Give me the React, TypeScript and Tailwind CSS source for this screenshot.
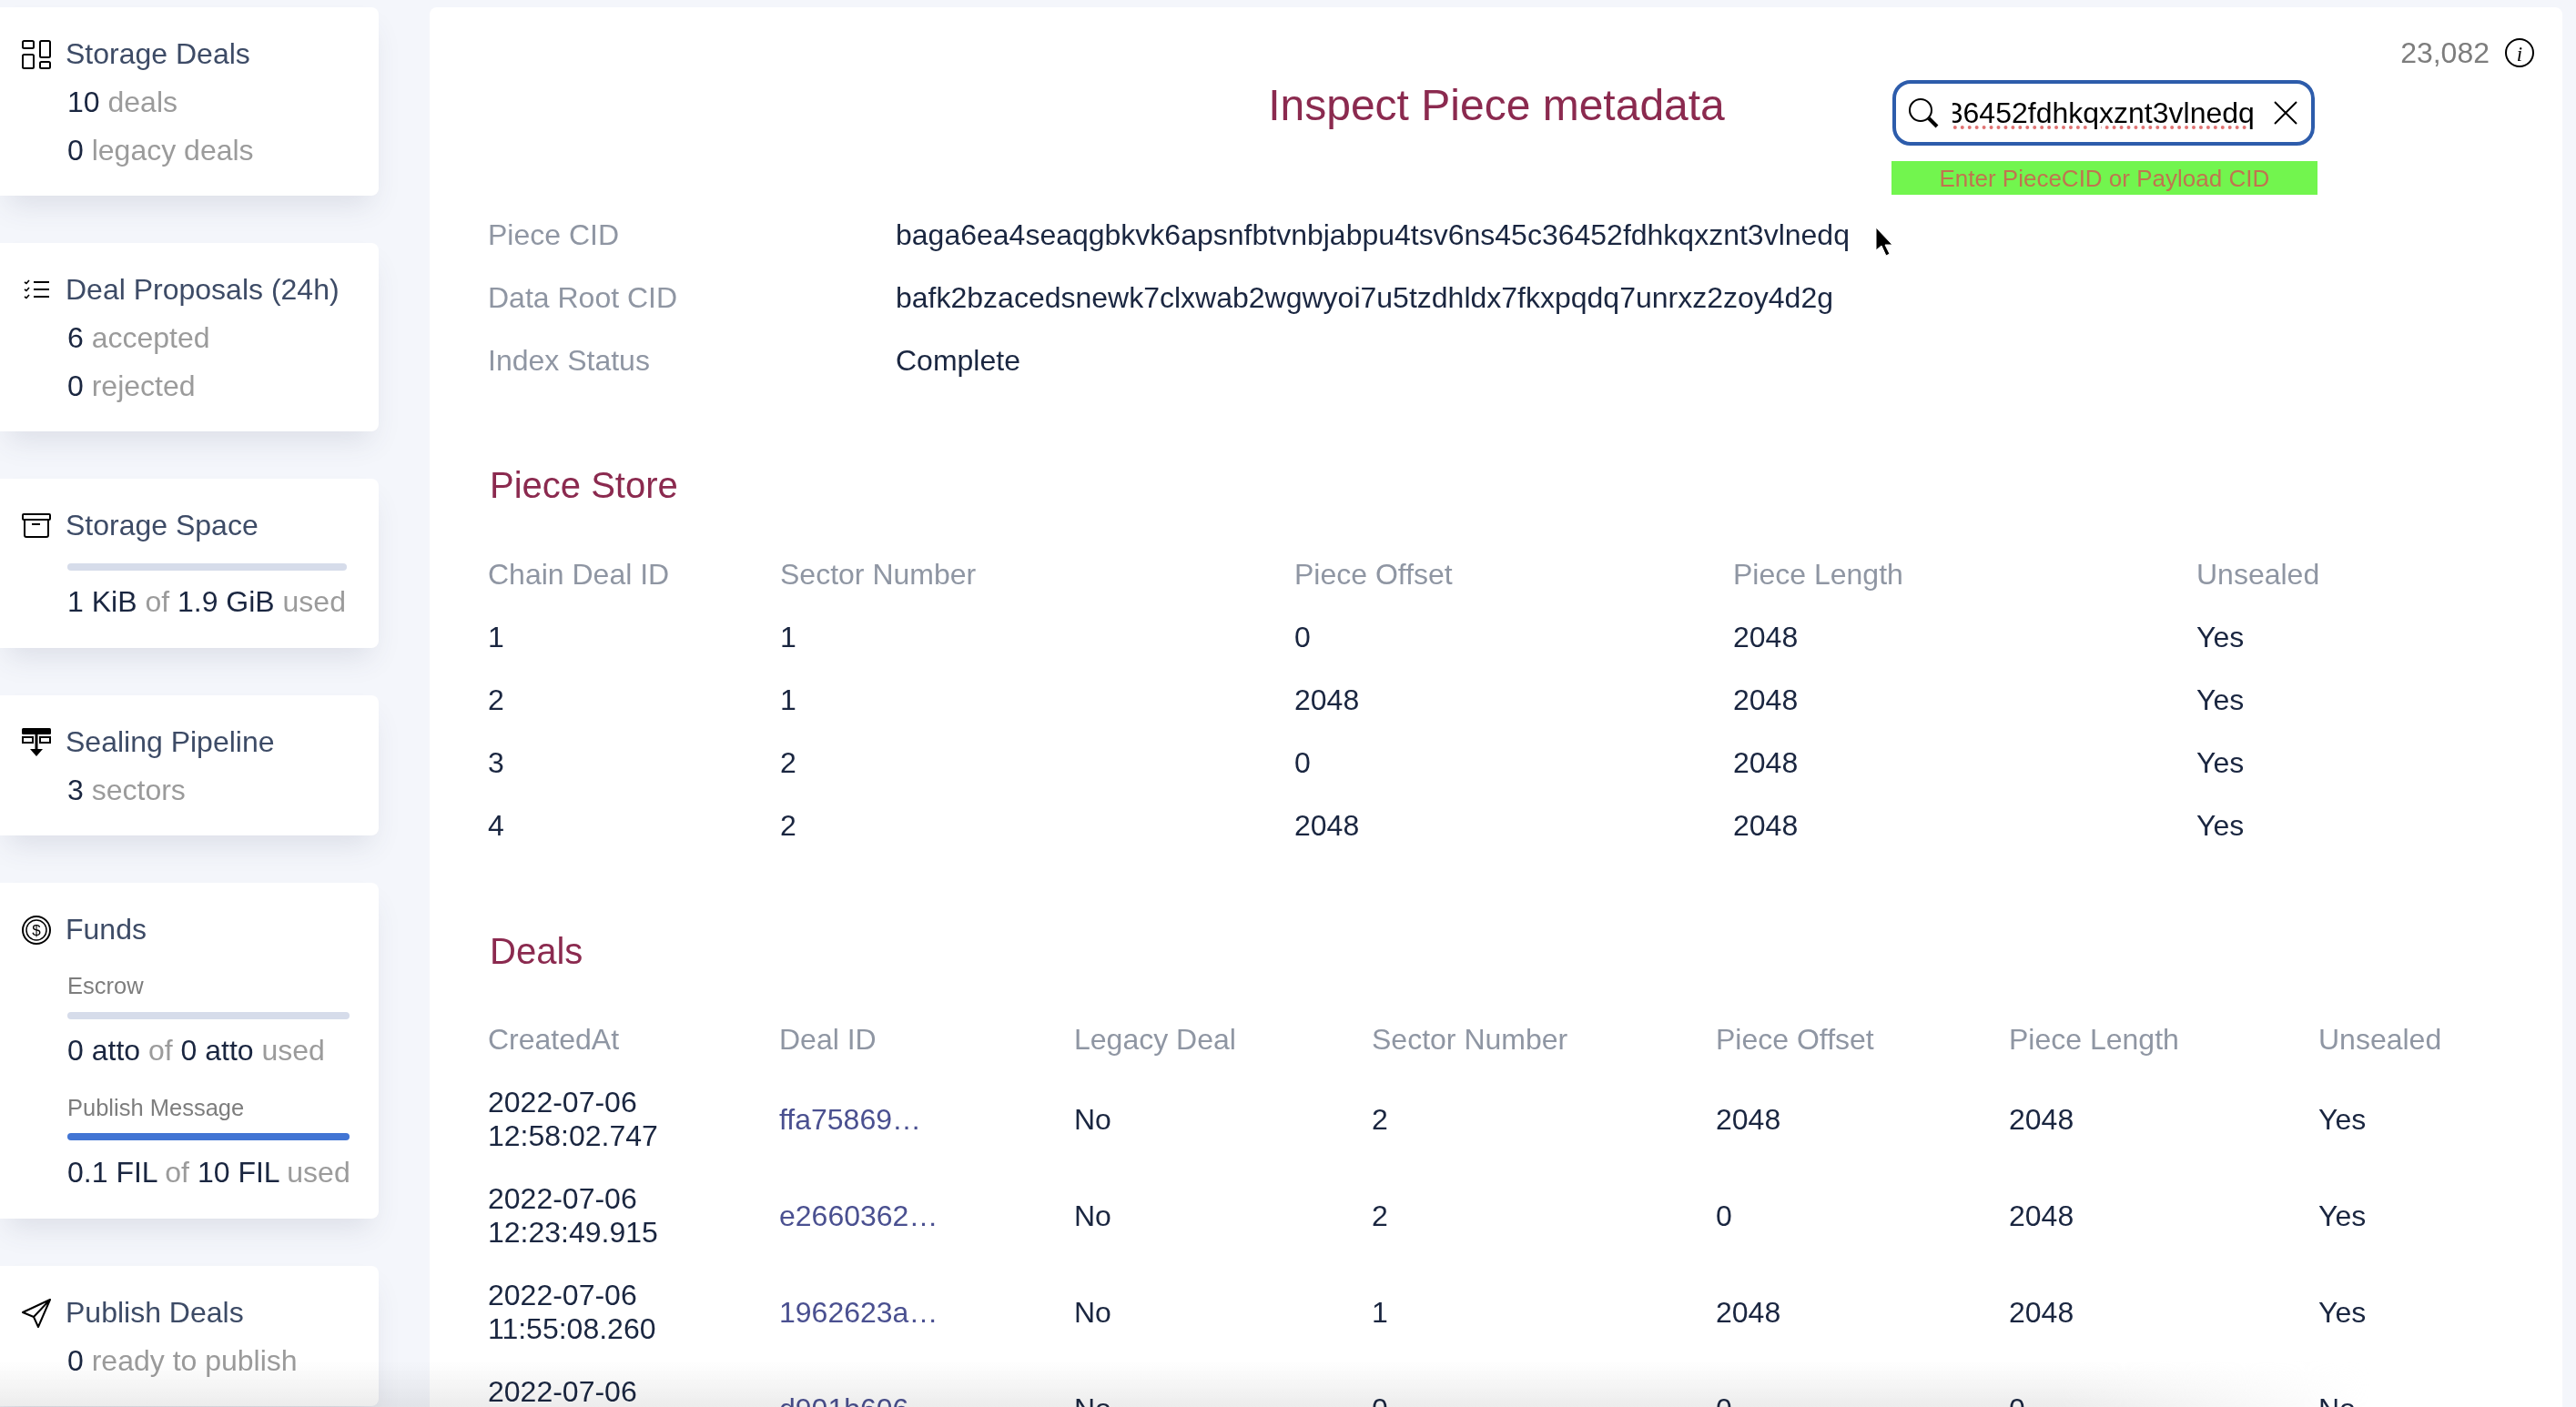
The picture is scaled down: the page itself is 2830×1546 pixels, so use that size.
import React from 'react';

const StorageIcon = () => (
  <svg width="32" height="32" viewBox="0 0 32 32" fill="none" stroke="black" strokeWidth="2">
    <rect x="1" y="1" width="12" height="8" rx="1.5" />
    <rect x="1" y="16" width="12" height="15" rx="1.5" />
    <rect x="20" y="1" width="11" height="18" rx="1.5" />
    <rect x="20" y="24" width="11" height="7" rx="1.5" />
  </svg>
);

const ListIcon = () => (
  <svg width="32" height="32" viewBox="0 0 32 32" fill="none" stroke="black">
    <path d="M13 7h17M13 15h17M13 23h17" strokeWidth="2" />
    <path d="M3 7l2 1.5 3-3.5M3 15l2 1.5 3-3.5M3 23l2 1.5 3-3.5" strokeWidth="1.6" />
  </svg>
);

const ArchiveIcon = () => (
  <svg width="32" height="32" viewBox="0 0 32 32" fill="none" stroke="black" strokeWidth="2">
    <rect x="1" y="3" width="30" height="6" rx="1" />
    <path d="M3 9v17a2 2 0 0 0 2 2h22a2 2 0 0 0 2-2V9" />
    <path d="M11 14h9" />
  </svg>
);

const PipelineIcon = () => (
  <svg width="32" height="32" viewBox="0 0 32 32" fill="none">
    <rect x="0" y="0" width="32" height="7" rx="1.5" fill="black" />
    <path d="M1 10h11v6H1zM20 10h11v6H20z" stroke="black" strokeWidth="2" />
    <path d="M16 6v19" stroke="black" strokeWidth="3" />
    <path d="M9 23h14l-7 8z" fill="black" />
  </svg>
);

const FundsIcon = () => (
  <svg width="32" height="32" viewBox="0 0 32 32" fill="none" stroke="black">
    <circle cx="16" cy="16" r="15" strokeWidth="2" />
    <circle cx="16" cy="16" r="11" strokeWidth="1.5" />
    <text x="16" y="22" textAnchor="middle" fontSize="17" fill="black" stroke="none">$</text>
  </svg>
);

const SendIcon = () => (
  <svg width="32" height="32" viewBox="0 0 32 32" fill="none" stroke="black" strokeWidth="2" strokeLinejoin="round">
    <path d="M31 1L1 15l12 5 5 11zM31 1L13 20" />
  </svg>
);

const Num = ({ children }: { children: React.ReactNode }) => <span className="text-[#1a2640]">{children}</span>;
const Dim = ({ children }: { children: React.ReactNode }) => <span className="text-[#9b9b9b]">{children}</span>;

const Card = ({ icon, title, tall, children }: { icon: React.ReactNode; title: string; tall?: boolean; children: React.ReactNode }) => (
  <div className={`bg-white rounded-r-lg shadow-[0_18px_30px_-8px_rgba(60,70,100,0.13)] pt-[25px] pl-6 flex gap-[17px] shrink-0 ${tall ? 'pb-[24px]' : 'pb-[23px]'}`}>
    <div className="w-8 h-[53px] flex items-center shrink-0">{icon}</div>
    <div>
      <div className="text-[#3d4b66] leading-[53px] -ml-px">{title}</div>
      {children}
    </div>
  </div>
);

const Row = ({ children }: { children: React.ReactNode }) => <div className="leading-[53px] whitespace-nowrap ml-px">{children}</div>;

const Sidebar = () => (
  <div className="w-[416px] shrink-0 flex flex-col gap-[52px] text-[32px]">
    <Card icon={<StorageIcon />} title="Storage Deals">
      <Row><Num>10</Num> <Dim>deals</Dim></Row>
      <Row><Num>0</Num> <Dim>legacy deals</Dim></Row>
    </Card>
    <Card icon={<ListIcon />} title="Deal Proposals (24h)">
      <Row><Num>6</Num> <Dim>accepted</Dim></Row>
      <Row><Num>0</Num> <Dim>rejected</Dim></Row>
    </Card>
    <Card tall icon={<ArchiveIcon />} title="Storage Space">
      <div className="w-[307px] h-2 ml-px rounded bg-[#d6dcea] mt-[15px] mb-2" />
      <Row><Num>1 KiB</Num> <Dim>of</Dim> <Num>1.9 GiB</Num> <Dim>used</Dim></Row>
    </Card>
    <Card icon={<PipelineIcon />} title="Sealing Pipeline">
      <Row><Num>3</Num> <Dim>sectors</Dim></Row>
    </Card>
    <Card tall icon={<FundsIcon />} title="Funds">
      <div className="text-[25.5px] leading-[30px] text-[#7d7d7d] mt-[20px] ml-px">Escrow</div>
      <div className="w-[310px] h-2 ml-px rounded bg-[#d6dcea] mt-[14px] mb-2" />
      <Row><Num>0 atto</Num> <Dim>of</Dim> <Num>0 atto</Num> <Dim>used</Dim></Row>
      <div className="text-[25.5px] leading-[30px] text-[#7d7d7d] mt-[21px] ml-px">Publish Message</div>
      <div className="w-[310px] h-2 ml-px rounded bg-[#4275d4] mt-[13px] mb-[9px]" />
      <Row><Num>0.1 FIL</Num> <Dim>of</Dim> <Num>10 FIL</Num> <Dim>used</Dim></Row>
    </Card>
    <Card icon={<SendIcon />} title="Publish Deals">
      <Row><Num>0</Num> <Dim>ready to publish</Dim></Row>
    </Card>
  </div>
);

const SearchBox = () => (
  <div className="w-[464px] h-[72px] ml-px rounded-[20px] border-[4px] border-[#2d5cab] flex items-center pl-[13px] pr-[15px] bg-white">
    <svg width="34" height="34" viewBox="0 0 34 34" fill="none" stroke="black" className="shrink-0">
      <circle cx="14" cy="14" r="12" strokeWidth="2" />
      <path d="M23 23l9 9" strokeWidth="4" />
    </svg>
    <div className="w-[332px] ml-[15px] overflow-hidden flex justify-end shrink-0">
      <span className="text-black whitespace-nowrap leading-[44px] underline decoration-dotted decoration-[#e07272] decoration-[4px] underline-offset-[3px]">
        c36452fdhkqxznt3vlnedq
      </span>
    </div>
    <svg width="26" height="26" viewBox="0 0 26 26" stroke="black" strokeWidth="2" className="ml-auto shrink-0">
      <path d="M1 1l24 24M25 1L1 25" />
    </svg>
  </div>
);

const InfoIcon = () => (
  <svg width="32" height="32" viewBox="0 0 32 32" fill="none" stroke="black">
    <circle cx="16" cy="16" r="15" strokeWidth="2" />
    <text x="16" y="25" textAnchor="middle" fontSize="23" fontStyle="italic" fontFamily="'Liberation Serif', serif" fill="black" stroke="none">i</text>
  </svg>
);

const Header = () => (
  <div className="grid grid-cols-[1fr_auto_1fr] h-[215px]">
    <div />
    <h1 className="text-[48px] leading-[56px] text-[#8b2a4f] mt-[80px] ml-px">Inspect Piece metadata</h1>
    <div className="flex justify-between pr-[31px]">
      <div className="ml-[183px] mt-[80px]">
        <SearchBox />
        <div className="w-[468px] h-[37px] mt-[17px] bg-[#72f54e] text-[#c0744f] text-[26px] leading-[38px] text-center">
          Enter PieceCID or Payload CID
        </div>
      </div>
      <div className="flex items-center gap-[17px] h-[37px] mt-[31px]">
        <span className="text-[#7d7d7d]">23,082</span>
        <InfoIcon />
      </div>
    </div>
  </div>
);

const Th = ({ children }: { children: React.ReactNode }) => (
  <th className="font-normal text-left text-[#8f96a3] py-4 p-0 leading-[37px]">{children}</th>
);
const Td = ({ children, link }: { children: React.ReactNode; link?: boolean }) => (
  <td className={`py-4 p-0 leading-[37px] align-middle ${link ? 'text-[#4a5090]' : 'text-[#1a2640]'}`}>{children}</td>
);

const pieceRows = [
  ['1', '1', '0', '2048', 'Yes'],
  ['2', '1', '2048', '2048', 'Yes'],
  ['3', '2', '0', '2048', 'Yes'],
  ['4', '2', '2048', '2048', 'Yes'],
];

const dealRows = [
  ['2022-07-06', '12:58:02.747', 'ffa75869…', 'No', '2', '2048', '2048', 'Yes'],
  ['2022-07-06', '12:23:49.915', 'e2660362…', 'No', '2', '0', '2048', 'Yes'],
  ['2022-07-06', '11:55:08.260', '1962623a…', 'No', '1', '2048', '2048', 'Yes'],
  ['2022-07-06', '11:40:12.118', 'd901b606…', 'No', '0', '0', '0', 'No'],
];

const Details = () => (
  <div className="grid grid-cols-[448px_1fr] auto-rows-[69px] items-center">
    <div className="text-[#8f96a3]">Piece CID</div>
    <div className="text-[#1a2640]">baga6ea4seaqgbkvk6apsnfbtvnbjabpu4tsv6ns45c36452fdhkqxznt3vlnedq</div>
    <div className="text-[#8f96a3]">Data Root CID</div>
    <div className="text-[#1a2640]">bafk2bzacedsnewk7clxwab2wgwyoi7u5tzdhldx7fkxpqdq7unrxz2zoy4d2g</div>
    <div className="text-[#8f96a3]">Index Status</div>
    <div className="text-[#1a2640]">Complete</div>
  </div>
);

const PieceStore = () => (
  <>
    <h2 className="text-[40px] leading-[48px] text-[#8b2a4f] mt-[79px] ml-0.5">Piece Store</h2>
    <table className="table-fixed w-full mt-[40px]">
      <colgroup>
        <col className="w-[321px]" />
        <col className="w-[565px]" />
        <col className="w-[482px]" />
        <col className="w-[509px]" />
        <col />
      </colgroup>
      <thead>
        <tr>
          <Th>Chain Deal ID</Th>
          <Th>Sector Number</Th>
          <Th>Piece Offset</Th>
          <Th>Piece Length</Th>
          <Th>Unsealed</Th>
        </tr>
      </thead>
      <tbody>
        {pieceRows.map((row) => (
          <tr key={row[0]}>
            {row.map((cell, i) => <Td key={i}>{cell}</Td>)}
          </tr>
        ))}
      </tbody>
    </table>
  </>
);

const Deals = () => (
  <>
    <h2 className="text-[40px] leading-[48px] text-[#8b2a4f] mt-[79px] ml-0.5">Deals</h2>
    <table className="table-fixed w-full mt-[39px]">
      <colgroup>
        <col className="w-[320px]" />
        <col className="w-[324px]" />
        <col className="w-[327px]" />
        <col className="w-[378px]" />
        <col className="w-[322px]" />
        <col className="w-[340px]" />
        <col />
      </colgroup>
      <thead>
        <tr>
          <Th>CreatedAt</Th>
          <Th>Deal ID</Th>
          <Th>Legacy Deal</Th>
          <Th>Sector Number</Th>
          <Th>Piece Offset</Th>
          <Th>Piece Length</Th>
          <Th>Unsealed</Th>
        </tr>
      </thead>
      <tbody>
        {dealRows.map((row) => (
          <tr key={row[2]}>
            <Td>{row[0]}<br />{row[1]}</Td>
            <Td link>{row[2]}</Td>
            <Td>{row[3]}</Td>
            <Td>{row[4]}</Td>
            <Td>{row[5]}</Td>
            <Td>{row[6]}</Td>
            <Td>{row[7]}</Td>
          </tr>
        ))}
      </tbody>
    </table>
  </>
);

export default function App() {
  return (
    <div className="relative h-screen overflow-hidden bg-[#f4f6fb] pt-2 pr-[15px] flex gap-[56px] text-[32px] font-['Liberation_Sans',Arial,sans-serif]">
      <Sidebar />
      <main className="flex-1 min-w-0 bg-white rounded-t-lg">
        <Header />
        <div className="pl-16">
          <Details />
          <PieceStore />
          <Deals />
        </div>
      </main>

      {/* mouse pointer in the capture */}
      <svg width="20" height="34" viewBox="0 0 20 34" className="absolute left-[2060px] top-[249px]">
        <path d="M1 1v25l6-5 5 11 4-2-5-10h8z" fill="black" stroke="white" strokeWidth="1" />
      </svg>

      {/* soft fade at the bottom of the capture */}
      <div className="absolute inset-x-0 bottom-0 h-[50px] pointer-events-none mix-blend-multiply bg-gradient-to-t from-[#ececec] to-transparent [mask-image:linear-gradient(to_right,black_80%,transparent_92%)]" />
    </div>
  );
}
